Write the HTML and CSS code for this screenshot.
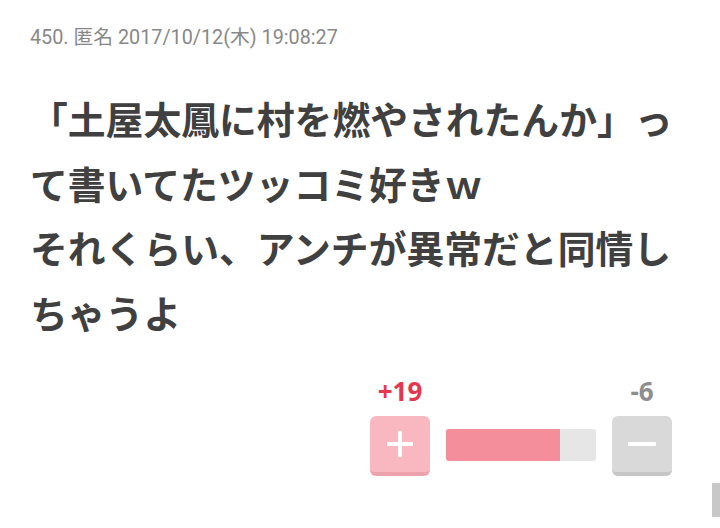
FILE: index.html
```html
<!DOCTYPE html>
<html lang="ja">
<head>
<meta charset="utf-8">
<link rel="stylesheet" href="styles.css">
</head>
<body>
<div class="post">
  <div class="meta">450. 匿名 2017/10/12(木) 19:08:27</div>
  <div class="body">「土屋太鳳に村を燃やされたんか」っ<br>て書いてたツッコミ好きｗ<br>それくらい、アンチが異常だと同情し<br>ちゃうよ</div>
  <div class="vote">
    <div class="count plus-count">+19</div>
    <div></div>
    <div class="count minus-count">-6</div>
    <div class="btn btn-plus"><span class="h"></span><span class="v"></span></div>
    <div class="bar"><div class="fill" style="width:76%"></div></div>
    <div class="btn btn-minus"><span class="h"></span></div>
  </div>
</div>
<div class="scroll"></div>
</body>
</html>
```
FILE: styles.css
```css
html, body {
  margin: 0;
  padding: 0;
  background: #fff;
  width: 720px;
  height: 528px;
  overflow: hidden;
}
.post {
  padding: 26px 30px 0 30px;
}
.meta {
  font-family: Roboto, "Noto Sans CJK JP", sans-serif;
  font-size: 19.8px;
  line-height: 24px;
  color: #888;
}
.body {
  margin-top: 36px;
  font-family: "Noto Sans CJK JP", sans-serif;
  font-weight: 700;
  font-size: 37.8px;
  line-height: 64.5px;
  color: #404040;
  white-space: nowrap;
  letter-spacing: 0;
}
.vote {
  margin-top: 32px;
  margin-left: 340px;
  display: grid;
  grid-template-columns: 60px 150px 60px;
  column-gap: 16px;
  row-gap: 10px;
  align-items: center;
}
.count {
  font-family: "Open Sans", "Noto Sans", sans-serif;
  font-weight: 700;
  font-size: 26px;
  line-height: 30px;
  text-align: center;
}
.plus-count { color: #e4374e; }
.minus-count { color: #8e8e8e; }
.btn {
  position: relative;
  height: 56px;
  border-radius: 6px;
  border-bottom: 4px solid;
}
.btn-plus { background: #f9b8c0; border-color: #eda3ad; }
.btn-minus { background: #d9d9d9; border-color: #c6c6c6; }
.btn .h {
  position: absolute;
  left: 17px;
  top: 26px;
  width: 26px;
  height: 4px;
  background: #fff;
  border-radius: 1px;
}
.btn .v {
  position: absolute;
  left: 28px;
  top: 15px;
  width: 4px;
  height: 26px;
  background: #fff;
  border-radius: 1px;
}
.btn-minus .h { left: 16px; width: 28px; }
.bar {
  height: 32px;
  background: #e6e6e6;
  border-radius: 3px;
  overflow: hidden;
  margin-top: -2px;
}
.fill {
  height: 100%;
  background: #f48e9b;
}
.scroll {
  position: absolute;
  right: 0;
  top: 483px;
  width: 8px;
  height: 34px;
  background: #c8c8c8;
}
```
